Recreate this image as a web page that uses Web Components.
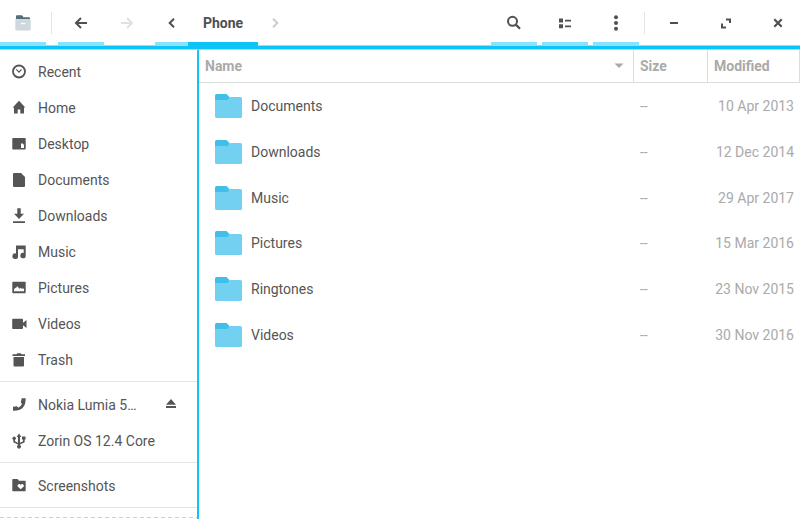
<!DOCTYPE html>
<html lang="en">
<head>
<meta charset="utf-8">
<title>Phone</title>
<style>
html, body { height: 100%; margin: 0; }
body { font: 14px/20px Roboto, "Liberation Sans", sans-serif; color: #555; background: #fff; overflow: hidden;
  --accent: #0cc4f8; --accent-soft: #89e2fb; --muted: #aaa; --line: #dcdcdc; }
</style>
</head>
<body>
<file-manager></file-manager>
<script>
const ICONS = {
  files: '<path fill="#546e7a" d="M1 3V1.200Q1 .3 1.700 .3H7L8.500 2.300H14Q15 2.300 15 3V7H1Z"/><path fill="#cfd8dc" d="M.3 4.700Q.3 4 1 4H15Q15.700 4 15.700 4.700V14.700Q15.700 15.500 15 15.500H1Q.3 15.500 .3 14.700Z"/><path fill="#fff" d="M6 7.800h4.300v1.400H6z"/>',
  back: '<path fill="none" stroke="currentColor" stroke-width="2" d="M8 3 3 8l5 5M3 8h11"/>',
  forward: '<path fill="none" stroke="currentColor" stroke-width="2" d="M8 3l5 5-5 5M13 8H2"/>',
  prev: '<path fill="none" stroke="currentColor" stroke-width="2" d="M10 3.700 5.700 8l4.300 4.300"/>',
  next: '<path fill="none" stroke="currentColor" stroke-width="2" d="M6 3.700 10.300 8l-4.300 4.300"/>',
  search: '<circle cx="6.500" cy="6.300" r="4.500" fill="none" stroke="currentColor" stroke-width="2"/><path stroke="currentColor" stroke-width="2.200" d="M9.800 9.600 14 13.800"/>',
  list: '<path d="M2 3.500h4v4H2zM2 9.300h4v4H2zM8 4.700h6v1.700H8zM8 10.500h6v1.700H8z"/>',
  menu: '<circle cx="8" cy="2.300" r="2"/><circle cx="8" cy="8" r="2"/><circle cx="8" cy="13.700" r="2"/>',
  minimize: '<path d="M4 7h8v2H4z"/>',
  restore: '<path fill="none" stroke="currentColor" stroke-width="2" d="M8 4.500h4V8M4 8.500v4h4"/>',
  close: '<path stroke="currentColor" stroke-width="2.200" d="M4.300 4.300l7.400 7.400M11.700 4.300l-7.400 7.400"/>',
  recent: '<circle cx="8" cy="7.500" r="6" fill="none" stroke="currentColor" stroke-width="1.800"/><path fill="none" stroke="currentColor" stroke-width="1.200" d="M5.300 5.300 8 8.100l2.500-2.600"/>',
  home: '<path d="M8 .8 14.300 7.500H13v6H9.300V9.500H6.700v4H3V7.500H1.700Z"/>',
  desktop: '<path fill-rule="evenodd" d="M2 2H14Q14.700 2 14.700 2.700V12.700Q14.700 13.500 14 13.500H2Q1.300 13.500 1.300 12.700V2.700Q1.300 2 2 2ZM10 7.500v4.500h3V9L11.700 7.500Z"/>',
  documents: '<path d="M3 1H10L14 5V14Q14 15 13 15H3Q2 15 2 14V2Q2 1 3 1Z"/>',
  downloads: '<path d="M6.300 .3h3.400v5.500H13L8 11 3 5.800h3.300zM2 13.300h12V15H2z"/>',
  music: '<path d="M5 1.500H14.700V11.500A2.700 2.700 0 1 1 12.700 9V5.300H7V12A2.800 2.800 0 1 1 5 9.500Z"/>',
  pictures: '<path fill-rule="evenodd" d="M2 1.800H14Q14.700 1.800 14.700 2.500V12.500Q14.700 13.300 14 13.300H2Q1.300 13.300 1.300 12.500V2.500Q1.300 1.800 2 1.800ZM3 11.300H13V9L12 8.300 11 9 10 7.800 8.500 8.800 6.300 6.300 5 8 4.300 7.700 3 9.500Z"/>',
  videos: '<path d="M2 2.800H11Q12 2.800 12 3.800V6.800L15.500 4V12L12 9.300V12Q12 13 11 13H2Q1.200 13 1.200 12V3.800Q1.200 2.800 2 2.800Z"/>',
  trash: '<path d="M1.500 2.300H5.500L6.300 1.200H9.700L10.500 2.300H14V4H1.500zM2.500 5H13V13.500Q13 14.500 12 14.500H3.500Q2.500 14.500 2.500 13.500Z"/>',
  phone: '<path d="M10.700 1.300H14.700Q14.800 8 11.500 11T2 13.700V9.800L6 9.300 7.300 10.800Q10 9.300 11 7L9.800 5.500Z"/>',
  usb: '<path d="M8 .5 10.400 4H9V9.800L12 8.200V6.500H11V3.500H14.500V6.500H13.700V9.200L9 11.500V12A1.900 1.900 0 1 1 7 12V11.500L2.300 9.200V6.800A1.700 1.700 0 1 1 4 6.800V8.200L7 9.800V4H5.600Z"/>',
  screenshots: '<path fill-rule="evenodd" d="M2 1H6.500L8 2.700H14Q14.700 2.700 14.700 3.500V12.500Q14.700 13.300 14 13.300H2Q1.300 13.300 1.300 12.500V2Q1.300 1 2 1ZM9.700 11.200 12.700 8.500A1.500 1.500 0 0 0 9.700 7 1.500 1.500 0 0 0 6.700 8.500Z"/>',
  eject: '<path d="M8 3 13 8.700H3zM3 10h10v2H3z"/>',
  sort: '<path d="M3.500 5.500h9L8 10z"/>',
  folder: '<path fill="#42bfe8" d="M0 1.500Q0 0 1.500 0H11.500L14.500 3V8H0Z"/><path fill="#72d1f0" d="M0 6H12.500L15 3H25.500Q27 3 27 4.500V22.500Q27 24 25.500 24H1.500Q0 24 0 22.500Z"/>'
};

class UiElement extends HTMLElement {
  connectedCallback() {
    if (!this.shadowRoot) this.attachShadow({ mode: 'open' }).innerHTML = this.render();
  }
}

customElements.define('ui-icon', class extends UiElement {
  render() {
    const name = this.getAttribute('name');
    const box = name === 'folder' ? [27, 24] : [16, 16];
    return `<style>:host{display:inline-flex;flex:none}svg{display:block;fill:currentColor}</style>
      <svg width="${box[0]}" height="${box[1]}" viewBox="0 0 ${box[0]} ${box[1]}" aria-hidden="true">${ICONS[name]}</svg>`;
  }
});

customElements.define('tool-button', class extends UiElement {
  render() {
    const off = this.hasAttribute('disabled') ? 'disabled' : '';
    return `<style>
      :host{display:block;width:46px;flex:none}
      :host([narrow]){width:33px}
      :host([wide]){width:70px}
      button{box-sizing:border-box;width:100%;height:100%;border:0;border-bottom:4px solid transparent;padding:4px 0 0;margin:0;
        background:none;color:#505050;font:inherit;font-weight:700;display:flex;align-items:center;justify-content:center}
      button:disabled{color:#e2e2e2}
      :host([narrow]) button:disabled{color:#ccc}
      :host([marked]) button{border-color:var(--accent-soft)}
      :host([current]) button{border-color:var(--accent)}
    </style><button type="button" aria-label="${this.getAttribute('label')}" ${off}><slot></slot></button>`;
  }
});

customElements.define('header-bar', class extends UiElement {
  render() {
    return `<style>
      :host{display:flex;position:relative;height:46px;border-bottom:3px solid var(--accent);
        box-shadow:0 1px var(--accent-soft),inset 0 -1px var(--accent-soft)}
      .rule{width:1px;height:22px;margin:12px 6px 0 5px;background:#e4e4e4;flex:none}
      nav{display:flex;margin-left:5px}
      .tools{display:flex;gap:5px;margin-left:auto}
      .window{display:flex;flex:none;gap:6px;margin-right:-1px}
    </style>
    <tool-button marked label="Files"><ui-icon name="files"></ui-icon></tool-button>
    <div class="rule"></div>
    <tool-button marked label="Back"><ui-icon name="back"></ui-icon></tool-button>
    <tool-button disabled label="Forward"><ui-icon name="forward"></ui-icon></tool-button>
    <nav aria-label="Path">
      <tool-button narrow marked label="Previous folder"><ui-icon name="prev"></ui-icon></tool-button>
      <tool-button wide current label="Phone">Phone</tool-button>
      <tool-button narrow disabled label="Next folder"><ui-icon name="next"></ui-icon></tool-button>
    </nav>
    <div class="tools">
      <tool-button marked label="Search"><ui-icon name="search"></ui-icon></tool-button>
      <tool-button marked label="View as list"><ui-icon name="list"></ui-icon></tool-button>
      <tool-button marked label="Menu"><ui-icon name="menu"></ui-icon></tool-button>
    </div>
    <div class="rule"></div>
    <div class="window">
      <tool-button label="Minimize"><ui-icon name="minimize"></ui-icon></tool-button>
      <tool-button label="Restore"><ui-icon name="restore"></ui-icon></tool-button>
      <tool-button label="Close"><ui-icon name="close"></ui-icon></tool-button>
    </div>`;
  }
});

customElements.define('place-item', class extends UiElement {
  render() {
    return `<style>
      :host{display:flex;align-items:center;height:36px}
      a{flex:1;min-width:0;display:flex;align-items:center;gap:11px;padding-left:11px;color:inherit;text-decoration:none}
      span{overflow:hidden;text-overflow:ellipsis;white-space:nowrap;flex:1}
      :host([ejectable]) a{padding-right:22px}
      button{border:0;padding:0;margin:0 18px 0 0;background:none;color:inherit}
    </style>
    <a href="#"><ui-icon name="${this.getAttribute('icon')}"></ui-icon><span><slot></slot></span></a>
    ${this.hasAttribute('ejectable') ? '<button type="button" aria-label="Eject"><ui-icon name="eject"></ui-icon></button>' : ''}`;
  }
});

customElements.define('places-sidebar', class extends UiElement {
  render() {
    return `<style>
      :host{display:block;box-sizing:border-box;width:199px;flex:none;padding-top:5px;border-right:2px solid var(--accent);overflow:hidden}
      hr{border:0;border-top:1px solid #e4e4e4;margin:3px 0 5px}
      .drop{height:36px;margin-top:9px;background:repeating-linear-gradient(90deg,#d0d0d0 0 4px,transparent 4px 7px) 0 0/100% 1px no-repeat}
    </style>
    <place-item icon="recent">Recent</place-item>
    <place-item icon="home">Home</place-item>
    <place-item icon="desktop">Desktop</place-item>
    <place-item icon="documents">Documents</place-item>
    <place-item icon="downloads">Downloads</place-item>
    <place-item icon="music">Music</place-item>
    <place-item icon="pictures">Pictures</place-item>
    <place-item icon="videos">Videos</place-item>
    <place-item icon="trash">Trash</place-item>
    <hr>
    <place-item icon="phone" ejectable>Nokia Lumia 520</place-item>
    <place-item icon="usb">Zorin OS 12.4 Core</place-item>
    <hr>
    <place-item icon="screenshots">Screenshots</place-item>
    <hr>
    <div class="drop"></div>`;
  }
});

const FILES = [['Documents', '10 Apr 2013'], ['Downloads', '12 Dec 2014'], ['Music', '29 Apr 2017'],
  ['Pictures', '15 Mar 2016'], ['Ringtones', '23 Nov 2015'], ['Videos', '30 Nov 2016']];

customElements.define('file-list', class extends UiElement {
  render() {
    return `<style>
      :host{display:block;flex:1;min-width:0}
      table{width:100%;height:309px;table-layout:fixed;border-collapse:separate;border-spacing:0}
      .size{width:74px}.modified{width:92px}
      th,td{box-sizing:border-box;padding:0 6px;text-align:left;white-space:nowrap}
      th{height:34px;border:solid var(--line);border-width:0 1px 1px 0;font-weight:700;color:var(--muted)}
      td{color:var(--muted)}
      td:last-child{text-align:right}
      .head{display:flex;justify-content:space-between;align-items:center}
      .file{display:flex;align-items:center;gap:9px;padding-left:10px;color:#555}
    </style>
    <table>
      <colgroup><col><col class="size"><col class="modified"></colgroup>
      <thead><tr><th><div class="head">Name<ui-icon name="sort"></ui-icon></div></th><th>Size</th><th>Modified</th></tr></thead>
      <tbody>${FILES.map(([n, d]) => `<tr><td><div class="file"><ui-icon name="folder"></ui-icon>${n}</div></td><td>--</td><td>${d}</td></tr>`).join('')}</tbody>
    </table>`;
  }
});

customElements.define('file-manager', class extends UiElement {
  render() {
    return `<style>
      :host{display:flex;flex-direction:column;height:100%}
      main{display:flex;flex:1;min-height:0}
    </style>
    <header-bar></header-bar>
    <main><places-sidebar></places-sidebar><file-list></file-list></main>`;
  }
});
</script>
</body>
</html>
